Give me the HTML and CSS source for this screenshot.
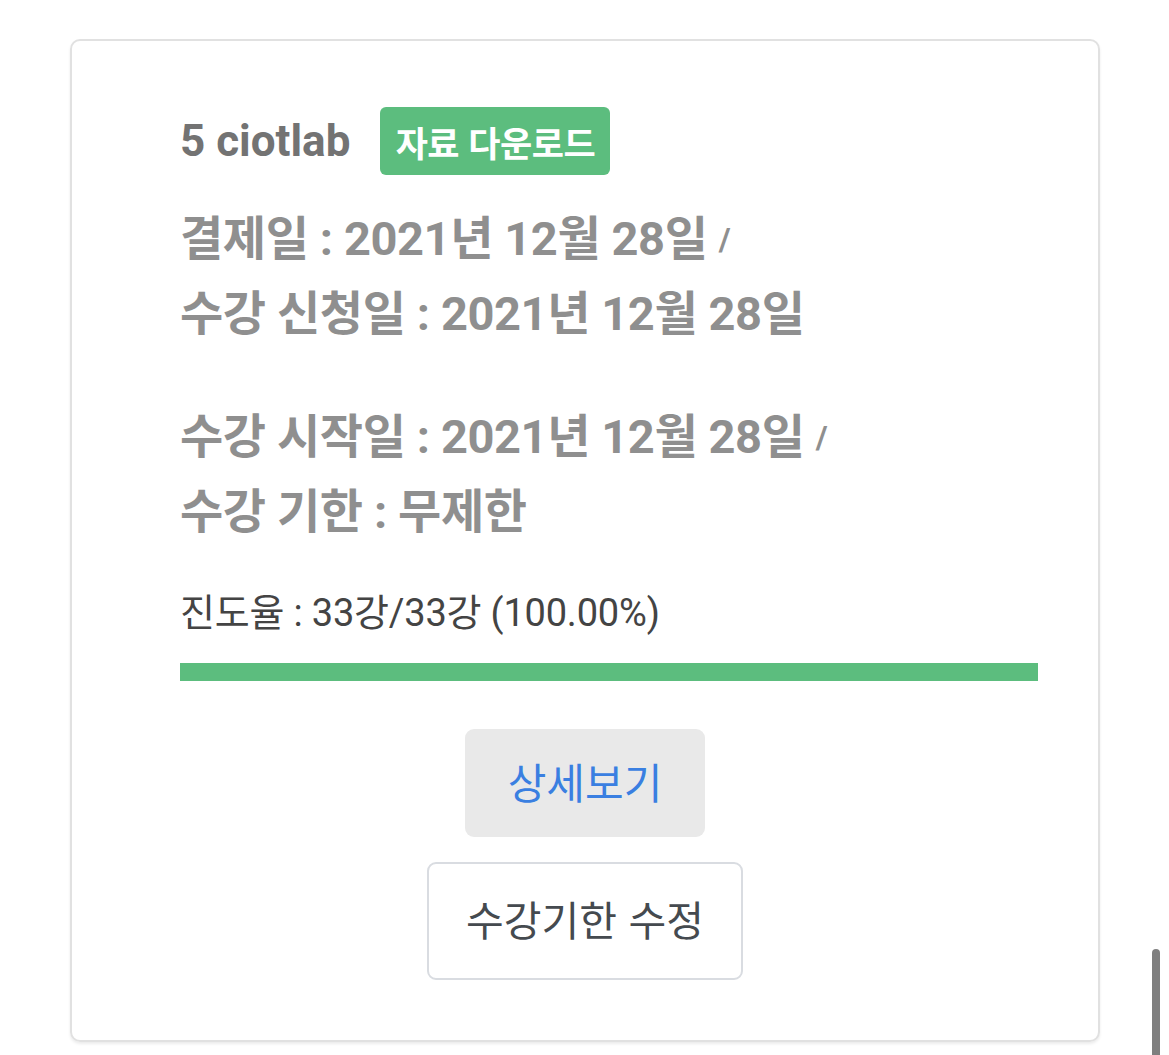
FILE: index.html
```html
<!DOCTYPE html>
<html lang="ko">
<head>
<meta charset="utf-8">
<title>수강 정보</title>
<link rel="stylesheet" href="styles.css">
</head>
<body>
<div class="page">
  <div class="card">
    <div class="info">
      <div class="title-row">
        <span class="title">5 ciotlab</span>
        <span class="badge">자료 다운로드</span>
      </div>
      <div class="dates">
        <div class="line">결제일 : 2021년 12월 28일 <span class="slash">/</span></div>
        <div class="line">수강 신청일 : 2021년 12월 28일</div>
      </div>
      <div class="dates second">
        <div class="line">수강 시작일 : 2021년 12월 28일 <span class="slash">/</span></div>
        <div class="line">수강 기한 : 무제한</div>
      </div>
      <div class="progress-text">진도율 : 33강/33강 (100.00%)</div>
      <div class="bar"><div class="bar-fill" style="width:100%"></div></div>
    </div>
    <div class="actions">
      <button class="btn btn-detail">상세보기</button>
      <button class="btn btn-edit">수강기한 수정</button>
    </div>
  </div>
</div>
<div class="scroll-indicator"></div>
</body>
</html>
```

FILE: styles.css
```css
html, body {
  margin: 0;
  padding: 0;
  background: #ffffff;
}
body {
  font-family: Roboto, "Noto Sans CJK KR", sans-serif;
}
.page {
  padding: 39px 69px 13px 70px;
}
.card {
  border: 2px solid #e1e1e1;
  border-radius: 10px;
  box-shadow: 0 2px 3px rgba(0,0,0,0.08);
  padding: 66px 0 60px 0;
  box-sizing: border-box;
  height: 1003px;
}
.info {
  padding: 0 60px 0 108px;
}
.title-row {
  display: flex;
  align-items: center;
  gap: 30px;
  height: 68px;
}
.title {
  font-size: 44px;
  font-weight: 700;
  color: #737373;
}
.badge {
  background: #5cbd7e;
  color: #ffffff;
  font-family: "Noto Sans CJK KR", sans-serif;
  font-weight: 700;
  font-size: 35px;
  height: 68px;
  width: 230px;
  border-radius: 6px;
  display: flex;
  align-items: center;
  justify-content: center;
  box-sizing: border-box;
  letter-spacing: -0.5px;
}
.dates {
  margin-top: 25px;
  font-size: 47px;
  font-weight: 700;
  color: #8f8f8f;
  letter-spacing: -0.4px;
}
.dates.second {
  margin-top: 48px;
}
.line {
  height: 75px;
  box-sizing: border-box;
  padding-bottom: 6px;
  display: flex;
  align-items: center;
  white-space: pre;
}
.slash {
  font-size: 32px;
  font-weight: 700;
  align-self: center;
  padding-top: 8px;
}
.progress-text {
  margin-top: 39px;
  height: 50px;
  box-sizing: border-box;
  padding-bottom: 6px;
  display: flex;
  align-items: center;
  font-size: 38px;
  color: #444444;
  letter-spacing: -0.2px;
}
.bar {
  margin-top: 26px;
  height: 18px;
  background: #e9ecef;
}
.bar-fill {
  height: 100%;
  background: #5cbd7e;
}
.actions {
  margin-top: 48px;
  display: flex;
  flex-direction: column;
  align-items: center;
  gap: 25px;
}
.btn {
  font-family: "Noto Sans CJK KR", sans-serif;
  border-radius: 9px;
  cursor: pointer;
  box-sizing: border-box;
  padding: 0 0 6px 0;
}
.btn-detail {
  width: 240px;
  height: 108px;
  background: #e9e9e9;
  border: none;
  color: #3a7fe1;
  font-size: 42px;
}
.btn-edit {
  width: 316px;
  height: 118px;
  background: #ffffff;
  border: 2px solid #d9dce1;
  color: #454a4f;
  font-size: 41px;
}
.scroll-indicator {
  position: fixed;
  left: 1152px;
  top: 949px;
  width: 8px;
  height: 120px;
  background: #7f7f7f;
  border-radius: 4px;
}
```
